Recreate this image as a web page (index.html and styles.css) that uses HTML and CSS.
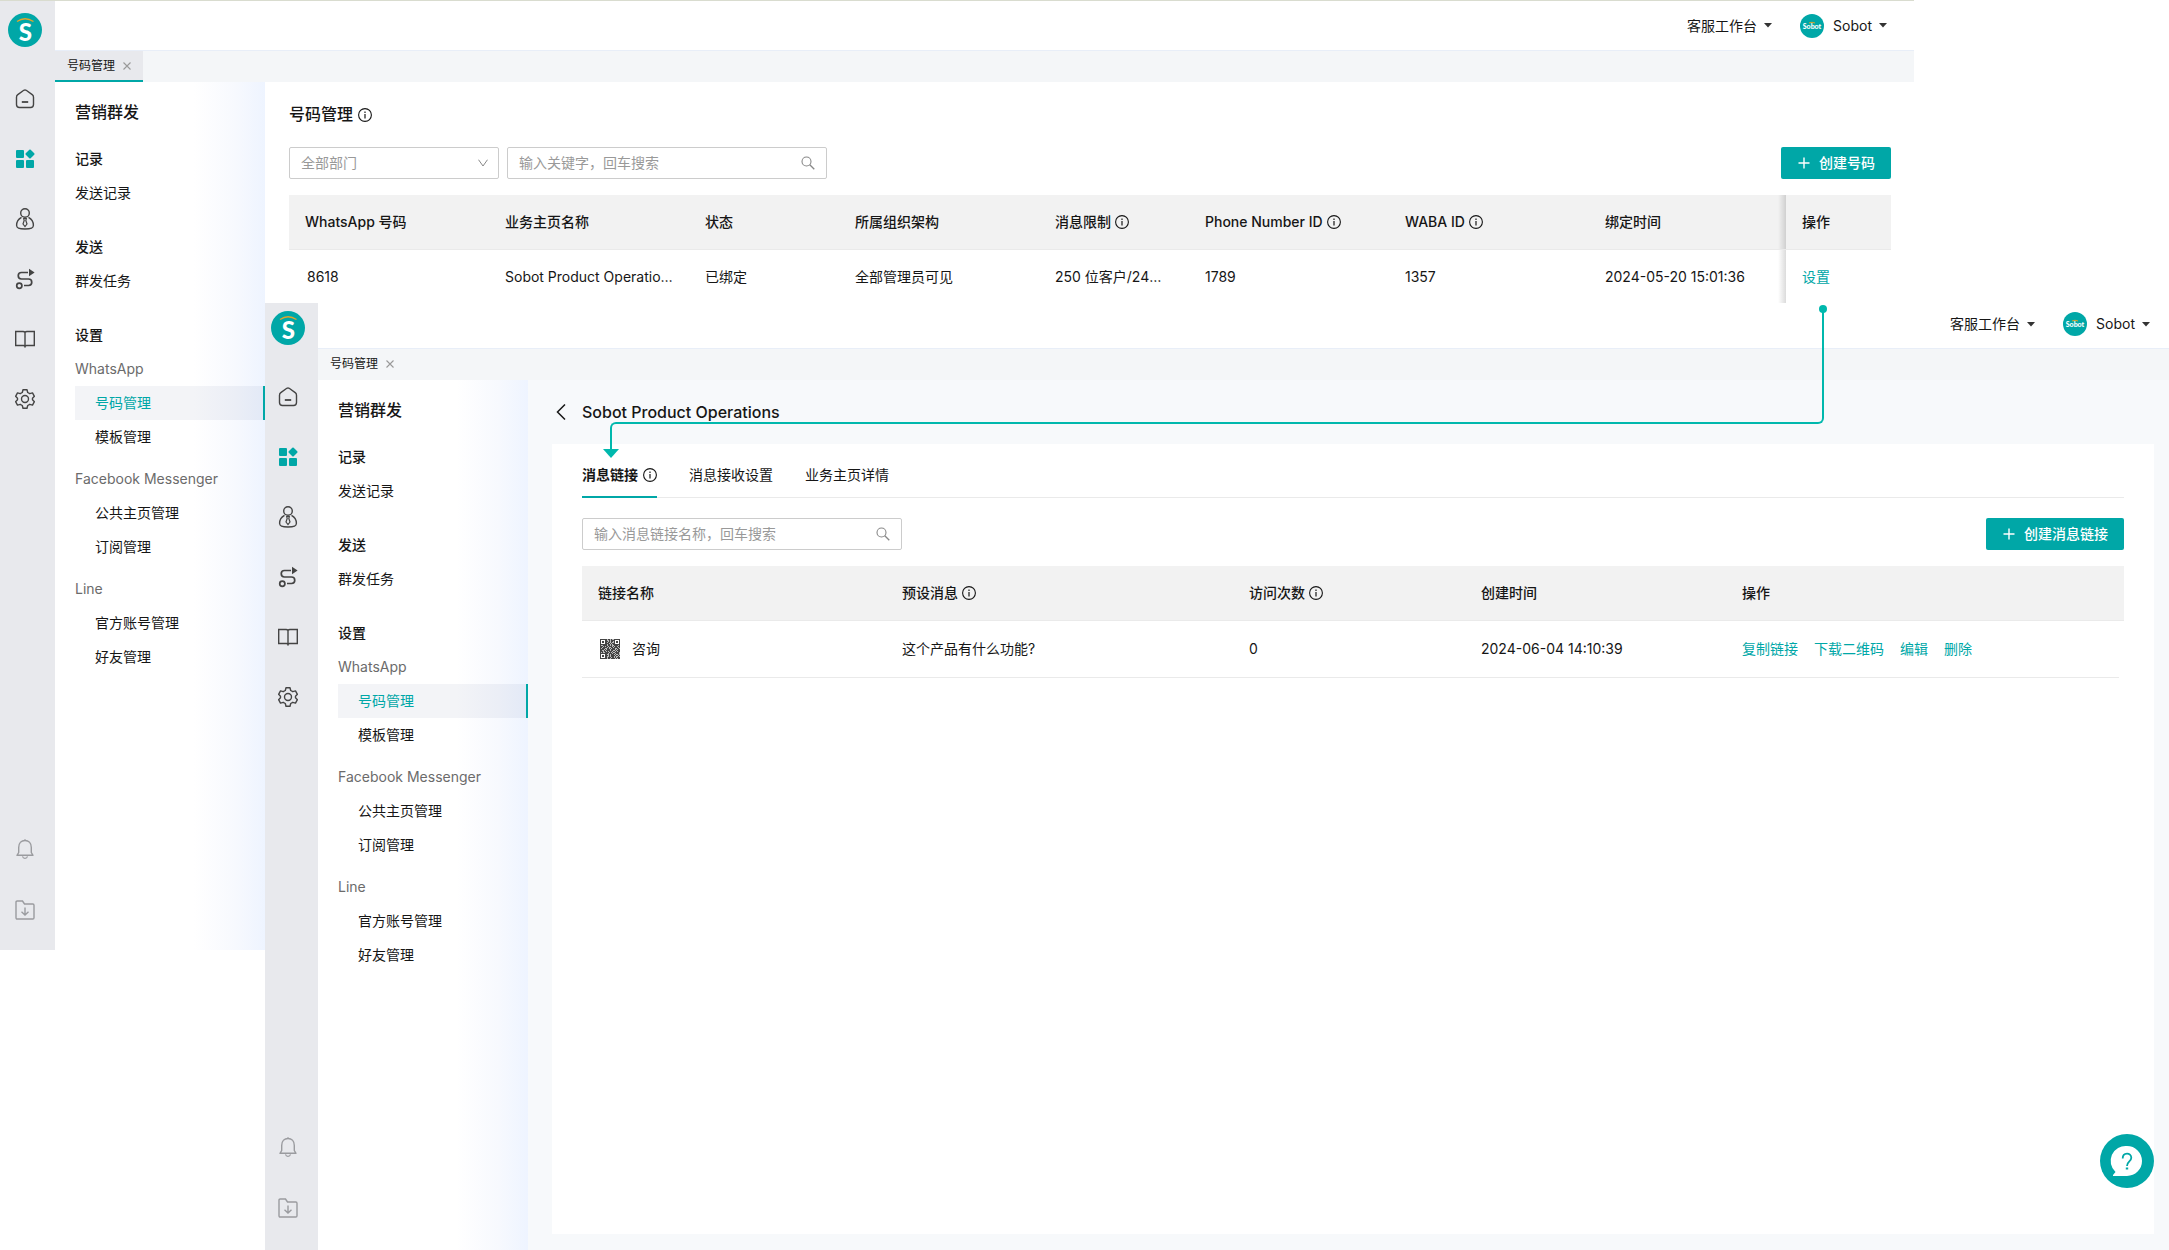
FILE: index.html
```html
<!DOCTYPE html>
<html lang="zh-CN">
<head>
<meta charset="utf-8">
<meta name="viewport" content="width=device-width, initial-scale=1">
<title>营销群发 - 号码管理</title>
<link rel="stylesheet" href="styles.css">
</head>
<body>
<svg class="sprite" aria-hidden="true">
  <symbol id="i-home" viewBox="0 0 20 20">
    <path d="M1.500 8.200V15.500Q1.500 18.500 4.500 18.500H15.500Q18.500 18.500 18.500 15.500V8.200Q18.500 6.500 17.200 5.600L11.200 1.300Q10 .5 8.800 1.300L2.800 5.600Q1.500 6.500 1.500 8.200Z" fill="none" stroke="currentColor" stroke-width="1.400"/>
    <path d="M6.800 13H13.200" stroke="currentColor" stroke-width="1.800"/>
  </symbol>
  <symbol id="i-apps" viewBox="0 1 20 20">
    <rect x="1" y="2" width="8" height="8" rx="1" fill="currentColor"/>
    <rect x="1" y="12" width="8" height="8" rx="1" fill="currentColor"/>
    <rect x="11" y="12" width="8" height="8" rx="1" fill="currentColor"/>
    <rect x="11.500" y="2.500" width="7" height="7" rx="1" fill="currentColor" transform="rotate(45 15 6)"/>
  </symbol>
  <symbol id="i-user" viewBox="0 0 20 22">
    <circle cx="10" cy="5" r="4.300" fill="none" stroke="currentColor" stroke-width="1.400"/>
    <path d="M6.500 9.300C3 11.200 1.600 14.200 1.600 17.200C1.600 20 3.500 21 10 21S18.400 20 18.400 17.200C18.400 14.200 17 11.200 13.500 9.300" fill="none" stroke="currentColor" stroke-width="1.400"/>
    <path d="M8.700 10.500H11.300L10.800 12.500L12 16L10 18.500L8 16L9.200 12.500Z" fill="none" stroke="currentColor" stroke-width="1.200"/>
  </symbol>
  <symbol id="i-route" viewBox="0 0 20 22">
    <path d="M13 4.500H6.500A3.200 3.200 0 0 0 6.500 11H13.500A3.200 3.200 0 0 1 13.500 17.500H9" fill="none" stroke="currentColor" stroke-width="1.700"/>
    <path d="M14 .8L19.600 4.500L14 8.200Z" fill="currentColor"/>
    <circle cx="4.300" cy="17.800" r="2.600" fill="none" stroke="currentColor" stroke-width="1.700"/>
  </symbol>
  <symbol id="i-book" viewBox="0 0 20 18">
    <path d="M10 2.500Q9.500 1.500 8 1.500H.7V15.500H8.500Q9.500 15.500 10 16.500Q10.500 15.500 11.500 15.500H19.300V1.500H12Q10.500 1.500 10 2.500ZM10 2.500V17.500" fill="none" stroke="currentColor" stroke-width="1.400"/>
  </symbol>
  <symbol id="i-gear" viewBox="0 0 20 20">
    <path d="M8 .8H12L12.700 3.500L14.800 4.700L17.500 3.900L19.400 7.300L17.500 9.200V10.800L19.400 12.700L17.500 16.100L14.800 15.300L12.700 16.500L12 19.200H8L7.300 16.500L5.200 15.300L2.500 16.100L.6 12.700L2.500 10.800V9.200L.6 7.300L2.500 3.900L5.200 4.700L7.300 3.500Z" fill="none" stroke="currentColor" stroke-width="1.400" stroke-linejoin="round"/>
    <circle cx="10" cy="10" r="3.500" fill="none" stroke="currentColor" stroke-width="1.400"/>
  </symbol>
  <symbol id="i-bell" viewBox="0 1 20 20">
    <path d="M2 16.300H18L16.300 13.500V8.500C16.300 4 13.500 1.500 10 1.500S3.700 4 3.700 8.500V13.500Z" fill="none" stroke="currentColor" stroke-width="1.400" stroke-linejoin="round"/>
    <path d="M10 .3V2M7.500 17.300Q8 19.300 10 19.300T12.500 17.300" fill="none" stroke="currentColor" stroke-width="1.200"/>
  </symbol>
  <symbol id="i-folder" viewBox="0 0 20 20">
    <path d="M1 2.200Q1 1 2.200 1H7.500L9.500 4H17.800Q19 4 19 5.200V17.800Q19 19 17.800 19H2.200Q1 19 1 17.800Z" fill="none" stroke="currentColor" stroke-width="1.400"/>
    <path d="M10 7.500V15M6.500 11.800L10 15L13.500 11.800" fill="none" stroke="currentColor" stroke-width="1.400"/>
  </symbol>
  <symbol id="i-info" viewBox="0 0 14 14">
    <circle cx="7" cy="7" r="6.400" fill="none" stroke="currentColor" stroke-width="1.100"/>
    <path d="M7 6V10.400M7 3.600V4.900" stroke="currentColor" stroke-width="1.200"/>
  </symbol>
  <symbol id="i-close" viewBox="0 0 8 8"><path d="M.5 .5L7.500 7.500M7.500 .5L.5 7.500" stroke="currentColor" stroke-width="1.100"/></symbol>
  <symbol id="i-caret" viewBox="0 0 8 5"><path d="M0 0H8L4 4.600Z" fill="currentColor"/></symbol>
  <symbol id="i-down" viewBox="0 0 10 8"><path d="M.5 .7L5 7L9.500 .7" fill="none" stroke="currentColor" stroke-width="1"/></symbol>
  <symbol id="i-search" viewBox="0 0 14 14"><circle cx="5.500" cy="5.500" r="4.500" fill="none" stroke="currentColor" stroke-width="1.100"/><path d="M8.800 8.800L13.300 13.300" stroke="currentColor" stroke-width="1.300"/></symbol>
  <symbol id="i-plus" viewBox="0 0 12 12"><path d="M6 .5V11.500M.5 6H11.500" stroke="currentColor" stroke-width="1.400"/></symbol>
</svg>

<div class="stage">
  <section class="window window-list">
    <nav class="rail" aria-label="主导航">
      <a class="logo" href="#" aria-label="Sobot"><svg viewBox="0 0 34 34"><circle cx="17" cy="17" r="17" fill="#00a7a7"/><path d="M9 8.500Q17 3 25.500 8.500" fill="none" stroke="#dfa52b" stroke-width="1.300"/><text x="17.300" y="27.500" text-anchor="middle">S</text></svg></a>
      <a class="rail-item" href="#" aria-label="首页"><svg><use href="#i-home"/></svg></a>
      <a class="rail-item is-active" href="#" aria-label="应用"><svg><use href="#i-apps"/></svg></a>
      <a class="rail-item" href="#" aria-label="客户"><svg><use href="#i-user"/></svg></a>
      <a class="rail-item" href="#" aria-label="流程"><svg><use href="#i-route"/></svg></a>
      <a class="rail-item" href="#" aria-label="知识库"><svg><use href="#i-book"/></svg></a>
      <a class="rail-item" href="#" aria-label="设置"><svg><use href="#i-gear"/></svg></a>
      <a class="rail-item is-muted rail-push" href="#" aria-label="通知"><svg><use href="#i-bell"/></svg></a>
      <a class="rail-item is-muted" href="#" aria-label="下载"><svg><use href="#i-folder"/></svg></a>
    </nav>
    <div class="frame">
      <header class="topbar">
        <button class="menu" type="button">客服工作台<svg class="caret"><use href="#i-caret"/></svg></button>
        <button class="menu" type="button"><svg class="avatar" viewBox="0 0 24 24"><circle cx="12" cy="12" r="12" fill="#00a7a7"/><path d="M9 9Q12 7.500 15 9" fill="none" stroke="#dfa52b"/><text x="12" y="14.500" text-anchor="middle">Sobot</text></svg>Sobot<svg class="caret"><use href="#i-caret"/></svg></button>
      </header>
      <div class="tabbar">
        <div class="page-tab is-active"><a href="#">号码管理</a><button type="button" aria-label="关闭"><svg><use href="#i-close"/></svg></button></div>
      </div>
      <div class="body">
        <nav class="sidebar" aria-label="营销群发">
          <h2>营销群发</h2>
          <div class="group"><h3>记录</h3><a href="#">发送记录</a></div>
          <div class="group"><h3>发送</h3><a href="#">群发任务</a></div>
          <div class="group">
            <h3>设置</h3>
            <div class="subgroup"><h4>WhatsApp</h4><a class="is-active" href="#">号码管理</a><a href="#">模板管理</a></div>
            <div class="subgroup"><h4>Facebook Messenger</h4><a href="#">公共主页管理</a><a href="#">订阅管理</a></div>
            <div class="subgroup"><h4>Line</h4><a href="#">官方账号管理</a><a href="#">好友管理</a></div>
          </div>
        </nav>
        <main class="list-main">
          <h1>号码管理<svg class="info"><use href="#i-info"/></svg></h1>
          <div class="toolbar">
            <div class="field field-select">
              <select aria-label="部门"><option>全部部门</option></select>
              <svg class="down"><use href="#i-down"/></svg>
            </div>
            <div class="field field-search">
              <input type="text" aria-label="搜索号码" placeholder="输入关键字，回车搜索">
              <svg class="search"><use href="#i-search"/></svg>
            </div>
            <button class="primary" type="button"><svg><use href="#i-plus"/></svg>创建号码</button>
          </div>
          <table class="numbers">
            <colgroup><col class="w200"><col class="w200"><col class="w150"><col class="w200"><col class="w150"><col class="w200"><col class="w200"><col><col class="w105"></colgroup>
            <thead><tr>
              <th>WhatsApp 号码</th><th>业务主页名称</th><th>状态</th><th>所属组织架构</th>
              <th>消息限制<svg class="info"><use href="#i-info"/></svg></th>
              <th>Phone Number ID<svg class="info"><use href="#i-info"/></svg></th>
              <th>WABA ID<svg class="info"><use href="#i-info"/></svg></th>
              <th>绑定时间</th><th class="pinned">操作</th>
            </tr></thead>
            <tbody><tr>
              <td>8618</td><td>Sobot Product Operations</td><td>已绑定</td><td>全部管理员可见</td>
              <td>250 位客户/24小时</td><td>1789</td><td>1357</td><td>2024-05-20 15:01:36</td>
              <td class="pinned"><a href="#">设置</a></td>
            </tr></tbody>
          </table>
        </main>
      </div>
    </div>
  </section>

  <section class="window window-detail">
    <nav class="rail" aria-label="主导航">
      <a class="logo" href="#" aria-label="Sobot"><svg viewBox="0 0 34 34"><circle cx="17" cy="17" r="17" fill="#00a7a7"/><path d="M9 8.500Q17 3 25.500 8.500" fill="none" stroke="#dfa52b" stroke-width="1.300"/><text x="17.300" y="27.500" text-anchor="middle">S</text></svg></a>
      <a class="rail-item" href="#" aria-label="首页"><svg><use href="#i-home"/></svg></a>
      <a class="rail-item is-active" href="#" aria-label="应用"><svg><use href="#i-apps"/></svg></a>
      <a class="rail-item" href="#" aria-label="客户"><svg><use href="#i-user"/></svg></a>
      <a class="rail-item" href="#" aria-label="流程"><svg><use href="#i-route"/></svg></a>
      <a class="rail-item" href="#" aria-label="知识库"><svg><use href="#i-book"/></svg></a>
      <a class="rail-item" href="#" aria-label="设置"><svg><use href="#i-gear"/></svg></a>
      <a class="rail-item is-muted rail-push" href="#" aria-label="通知"><svg><use href="#i-bell"/></svg></a>
      <a class="rail-item is-muted" href="#" aria-label="下载"><svg><use href="#i-folder"/></svg></a>
    </nav>
    <div class="frame">
      <header class="topbar">
        <button class="menu" type="button">客服工作台<svg class="caret"><use href="#i-caret"/></svg></button>
        <button class="menu" type="button"><svg class="avatar" viewBox="0 0 24 24"><circle cx="12" cy="12" r="12" fill="#00a7a7"/><path d="M9 9Q12 7.500 15 9" fill="none" stroke="#dfa52b"/><text x="12" y="14.500" text-anchor="middle">Sobot</text></svg>Sobot<svg class="caret"><use href="#i-caret"/></svg></button>
      </header>
      <div class="tabbar">
        <div class="page-tab"><a href="#">号码管理</a><button type="button" aria-label="关闭"><svg><use href="#i-close"/></svg></button></div>
      </div>
      <div class="body">
        <nav class="sidebar" aria-label="营销群发">
          <h2>营销群发</h2>
          <div class="group"><h3>记录</h3><a href="#">发送记录</a></div>
          <div class="group"><h3>发送</h3><a href="#">群发任务</a></div>
          <div class="group">
            <h3>设置</h3>
            <div class="subgroup"><h4>WhatsApp</h4><a class="is-active" href="#">号码管理</a><a href="#">模板管理</a></div>
            <div class="subgroup"><h4>Facebook Messenger</h4><a href="#">公共主页管理</a><a href="#">订阅管理</a></div>
            <div class="subgroup"><h4>Line</h4><a href="#">官方账号管理</a><a href="#">好友管理</a></div>
          </div>
        </nav>
        <main class="detail-main">
          <h1><button class="back" type="button" aria-label="返回"><svg viewBox="0 0 10 16"><path d="M9 .5L1.500 8L9 15.500" fill="none" stroke="currentColor" stroke-width="1.500"/></svg></button>Sobot Product Operations</h1>
          <div class="card">
            <div class="tabs">
              <a class="is-active" href="#">消息链接<svg class="info"><use href="#i-info"/></svg></a>
              <a href="#">消息接收设置</a>
              <a href="#">业务主页详情</a>
            </div>
            <div class="toolbar">
              <div class="field field-search">
                <input type="text" aria-label="搜索消息链接" placeholder="输入消息链接名称，回车搜索">
                <svg class="search"><use href="#i-search"/></svg>
              </div>
              <button class="primary" type="button"><svg><use href="#i-plus"/></svg>创建消息链接</button>
            </div>
            <table class="links">
              <colgroup><col class="c-name"><col class="c-message"><col class="c-visits"><col class="c-time"><col></colgroup>
              <thead><tr>
                <th>链接名称</th>
                <th>预设消息<svg class="info"><use href="#i-info"/></svg></th>
                <th>访问次数<svg class="info"><use href="#i-info"/></svg></th>
                <th>创建时间</th><th>操作</th>
              </tr></thead>
              <tbody><tr>
                <td><div class="named"><svg class="qr" viewBox="0 0 20 20" fill="none" stroke="#444">
                  <rect width="20" height="20" fill="#bbb" stroke="none"/>
                  <path d="M6 .5H14" stroke-dasharray="1 1 2 1 1 2 1"/><path d="M6 1.500H14" stroke-dasharray="1 2 1 1 3 1"/>
                  <path d="M6 2.500H14" stroke-dasharray="2 1 1 1 2 1"/><path d="M6 3.500H14" stroke-dasharray="1 1 2 1 1 2"/>
                  <path d="M6 4.500H14" stroke-dasharray="3 1 1 1 2 2"/><path d="M6 5.500H14" stroke-dasharray="1 1 2 1 1 1 1 1"/>
                  <path d="M0 6.500H20" stroke-dasharray="1 2 4 1 2 1"/><path d="M0 7.500H20" stroke-dasharray="3 1 1 1 2 1"/>
                  <path d="M0 8.500H20" stroke-dasharray="2 1 4 1 1 2"/><path d="M0 9.500H20" stroke-dasharray="1 1 3 2 2 1"/>
                  <path d="M0 10.500H20" stroke-dasharray="4 1 1 1 3 1"/><path d="M0 11.500H20" stroke-dasharray="2 2 1 1 4 1"/>
                  <path d="M0 12.500H20" stroke-dasharray="3 1 2 1 1 1"/><path d="M0 13.500H20" stroke-dasharray="1 1 1 2 4 1"/>
                  <path d="M6 14.500H20" stroke-dasharray="2 1 3 1"/><path d="M6 15.500H20" stroke-dasharray="1 2 1 1 3 1"/>
                  <path d="M6 16.500H20" stroke-dasharray="2 1 1 1 4 1"/><path d="M6 17.500H20" stroke-dasharray="1 2 1 1 3 1"/>
                  <path d="M6 18.500H20" stroke-dasharray="1 1 3 1 2 1"/><path d="M6 19.500H20" stroke-dasharray="1 1 2 1 4 1"/>
                  <g fill="#fff"><rect x=".5" y=".5" width="5" height="5"/><rect x="14.500" y=".5" width="5" height="5"/><rect x=".5" y="14.500" width="5" height="5"/></g>
                  <path d="M2 3H4M16 3H18M2 17H4" stroke-width="2"/>
                </svg>咨询</div></td>
                <td>这个产品有什么功能?</td><td>0</td><td>2024-06-04 14:10:39</td>
                <td><div class="actions"><a href="#">复制链接</a><a href="#">下载二维码</a><a href="#">编辑</a><a href="#">删除</a></div></td>
              </tr></tbody>
            </table>
          </div>
        </main>
      </div>
    </div>
    <button class="help" type="button" aria-label="帮助"><svg viewBox="0 0 54 54">
      <path d="M27 12A15 15 0 1 1 27 42H13Q12.500 41 15.500 38A15 15 0 0 1 27 12Z" fill="#fff"/>
      <path d="M22.700 24.500C22.700 17.800 31.300 18.300 31.300 23.700C31.300 27.500 27 27.300 27 32" fill="none" stroke="#00a7a7" stroke-width="1.800"/>
      <path d="M25.800 34.500H28.200" stroke="#00a7a7" stroke-width="2"/>
    </svg></button>
  </section>

  <div class="link-drop"></div>
  <div class="link-arrow"></div>
</div>
</body>
</html>
```
FILE: styles.css
```css
:root {
  --teal: #00a7a7;
  --connector: #00b8ad;
  --ink: #161616;
  --grey: #6b6b6b;
}

* { box-sizing: border-box; }

body {
  margin: 0;
  background: #fff;
  color: var(--ink);
  font: 14px/20px Inter, "Noto Sans CJK SC", sans-serif;
}

h1, h2, h3, h4 { margin: 0; font-weight: 500; }
a { color: inherit; text-decoration: none; }
button, input, select { font: inherit; color: inherit; }
button { padding: 0; border: 0; background: none; cursor: pointer; }
svg { display: block; flex: none; }
.sprite { position: absolute; width: 0; height: 0; }

/* Two overlapping application windows */
.stage {
  position: relative;
  display: grid;
  grid-template-columns: minmax(0, 1fr);
  min-height: 100vh;
}

.window {
  grid-area: 1 / 1;
  position: relative;
  display: flex;
}

.window-list {
  --rail: 55px;
  --rail-top: 12px;
  --rail-end: 5px;
  --rail-bottom: 10px;
  --topbar: 50px;
  align-self: start;
  min-height: 76vh;
  margin-right: 255px;
  border-top: 1px solid #d9dccf;
}

.window-detail {
  --rail: 53px;
  --rail-top: 8px;
  --rail-end: 7px;
  --rail-bottom: 12px;
  --topbar: 46px;
  margin: 303px 0 0 265px;
  background: #f7f9fb;
}

/* Icon rail */
.rail {
  display: flex;
  flex: none;
  flex-direction: column;
  align-items: center;
  width: var(--rail);
  padding: var(--rail-top) var(--rail-end) var(--rail-bottom) 0;
  background: #e8e9ed;
}

.logo { margin-bottom: 22px; }
.logo svg { width: 34px; height: 34px; }
.logo text { fill: #fff; font: 900 24px Lato, sans-serif; }

.rail-item {
  display: grid;
  place-items: center;
  width: 40px;
  height: 60px;
  color: #444;
}

.rail-item svg { width: 20px; height: 22px; }
.rail-item.is-active { color: var(--teal); }
.rail-item.is-muted { color: #9a9b9f; }
.rail-push { margin-top: auto; }

/* Window frame */
.frame {
  display: flex;
  flex: 1;
  flex-direction: column;
  min-width: 0;
}

.topbar {
  display: flex;
  flex: none;
  justify-content: flex-end;
  align-items: center;
  gap: 28px;
  height: var(--topbar);
  padding-right: 27px;
  border-bottom: 1px solid #e8eef8;
  background: #fff;
}

.window-detail .topbar { padding-right: 19px; padding-bottom: 3px; }
.menu { display: flex; align-items: center; }
.caret { width: 8px; height: 5px; margin-left: 7px; color: #333; }
.avatar { width: 24px; height: 24px; margin-right: 9px; }
.avatar text { fill: #fff; font: 900 7px Lato, sans-serif; }

.tabbar {
  display: flex;
  flex: none;
  height: 31px;
  background: #f4f6f8;
}

.page-tab {
  display: flex;
  align-items: center;
  gap: 8px;
  padding: 0 12px;
  border-bottom: 2px solid transparent;
  font-size: 12px;
}

.page-tab.is-active { border-color: var(--teal); background: #e8e9ed; }
.page-tab button { color: #999; }
.page-tab svg { width: 8px; height: 8px; }

.body { display: flex; flex: 1; }

/* Sidebar */
.sidebar {
  flex: none;
  width: 210px;
  padding: 14px 0 14px 20px;
  background: linear-gradient(90deg, #fff 66%, #f7f9fe 86%, #eef4ff);
}

.sidebar h2 { margin-bottom: 14px; font-size: 16px; line-height: 32px; }
.sidebar h3 { font-size: 14px; line-height: 34px; }
.sidebar h4 { color: var(--grey); font-size: 14px; font-weight: 400; line-height: 34px; }
.sidebar a { display: block; line-height: 34px; }
.group + .group { margin-top: 20px; }
.subgroup + .subgroup { margin-top: 8px; }
.subgroup a { padding-left: 20px; }

.subgroup a.is-active {
  border-right: 2px solid var(--teal);
  background: rgba(20, 40, 90, 0.05);
  color: var(--teal);
}

/* Shared controls */
.info {
  display: inline-block;
  width: 14px;
  height: 14px;
  margin-left: 5px;
  vertical-align: -2px;
}

.toolbar { display: flex; gap: 8px; margin-bottom: 16px; }
.field { position: relative; height: 32px; }
.field-select { width: 210px; }
.field-search { width: 320px; }

.field input, .field select {
  display: block;
  width: 100%;
  height: 32px;
  padding: 0 32px 2px 11px;
  border: 1px solid #ccc;
  border-radius: 2px;
  background: #fff;
  appearance: none;
}

.field select { padding-bottom: 0; }
.field select, .field input::placeholder { color: #999; opacity: 1; }
.field svg { position: absolute; top: 50%; transform: translateY(-50%); color: #888; pointer-events: none; }
.down { right: 11px; width: 10px; height: 8px; }
.search { right: 12px; width: 14px; height: 14px; }

.primary {
  display: flex;
  align-items: center;
  gap: 9px;
  height: 32px;
  margin-left: auto;
  padding: 0 16px 0 17px;
  border-radius: 2px;
  background: var(--teal);
  color: #fff;
  font-weight: 500;
}

.primary svg { width: 12px; height: 12px; }

table { width: 100%; border-spacing: 0; table-layout: fixed; }

th, td {
  padding: 0 16px;
  overflow: hidden;
  text-align: left;
  text-overflow: ellipsis;
  white-space: nowrap;
}

th { height: 55px; border-bottom: 1px solid #eaeaea; background: #f2f2f2; font-weight: 500; }
th .info { margin-left: 4px; }
td a { color: var(--teal); }

/* Number list */
.list-main { flex: 1; min-width: 0; padding: 20px 23px 0 24px; background: #fff; }
.list-main h1 { margin-bottom: 21px; font-size: 16px; line-height: 24px; }
.numbers td { height: 54px; }
.numbers td:first-child { padding-left: 18px; }
.w200 { width: 200px; }
.w150 { width: 150px; }
.w105 { width: 105px; }
.numbers .pinned { position: relative; overflow: visible; }

.pinned::before {
  content: "";
  position: absolute;
  inset: 0 100% 0 auto;
  width: 8px;
  background: linear-gradient(90deg, transparent, rgba(0, 0, 0, 0.14));
}

/* Link detail */
.detail-main { display: flex; flex: 1; flex-direction: column; min-width: 0; padding: 20px 15px 16px 24px; }
.detail-main h1 { display: flex; gap: 16px; align-items: center; margin-bottom: 20px; padding-left: 4px; font-size: 16px; line-height: 24px; }
.back svg { width: 10px; height: 16px; }
.card { flex: 1; padding: 9px 30px; background: #fff; }

.tabs { display: flex; gap: 32px; margin-bottom: 20px; border-bottom: 1px solid #eaeaea; }
.tabs a { margin-bottom: -1px; line-height: 43px; border-bottom: 2px solid transparent; }
.tabs a.is-active { border-color: var(--teal); font-weight: 600; }

.c-name { width: 304px; }
.c-message { width: 347px; }
.c-visits { width: 232px; }
.c-time { width: 261px; }
.links td { height: 57px; padding-bottom: 2px; }
.links tbody tr { background: linear-gradient(#eaeaea, #eaeaea) left bottom / calc(100% - 5px) 1px no-repeat; }
.named { display: flex; align-items: center; gap: 12px; padding-left: 2px; }
.qr { width: 20px; height: 20px; }
.actions { display: flex; gap: 16px; }

.help {
  position: absolute;
  right: 15px;
  bottom: 62px;
  width: 54px;
  height: 54px;
  border-radius: 50%;
  background: var(--teal);
}

/* Connector from the row action to the detail tab */
.link-drop {
  position: absolute;
  top: 309px;
  right: 345px;
  left: 616px;
  height: 115px;
  border: solid var(--connector);
  border-width: 0 2px 2px 0;
  border-radius: 0 0 6px 0;
  pointer-events: none;
}

.link-drop::before {
  content: "";
  position: absolute;
  top: -4px;
  right: -5px;
  width: 8px;
  height: 8px;
  border-radius: 50%;
  background: var(--connector);
}

.link-arrow {
  position: absolute;
  top: 422px;
  left: 610px;
  width: 8px;
  height: 28px;
  border: solid var(--connector);
  border-width: 2px 0 0 2px;
  border-radius: 6px 0 0 0;
  pointer-events: none;
}

.link-arrow::after {
  content: "";
  position: absolute;
  top: 25px;
  left: -9px;
  border: 8px solid transparent;
  border-top: 9px solid var(--connector);
  border-bottom: 0;
}
```
